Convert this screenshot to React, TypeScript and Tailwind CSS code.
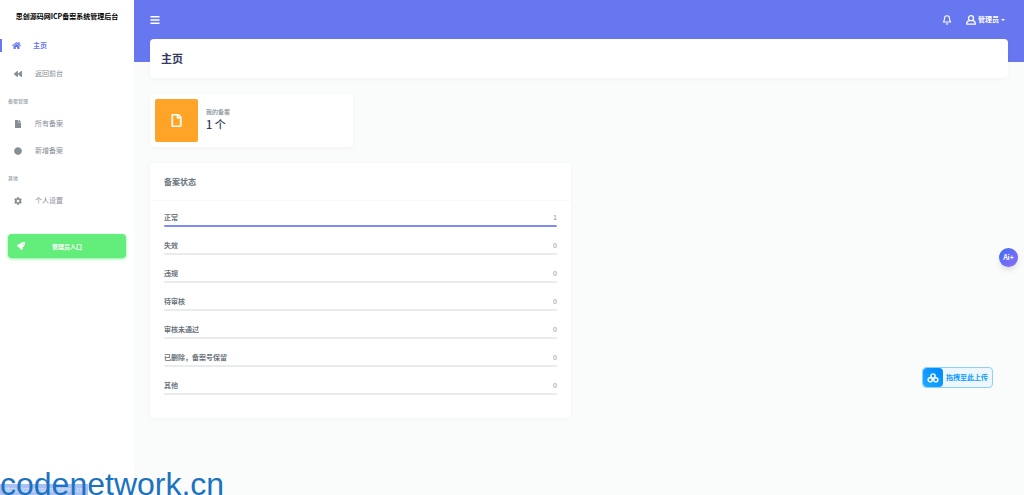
import React from "react";
import {
  FaHome,
  FaBackward,
  FaFile,
  FaCircle,
  FaCog,
  FaRocket,
  FaRegFile,
} from "react-icons/fa";
import { FiBell } from "react-icons/fi";

const recordMenu = [
  { label: "所有备案", icon: FaFile },
  { label: "新增备案", icon: FaCircle },
];

const statusList = [
  { label: "正常", count: 1 },
  { label: "失效", count: 0 },
  { label: "违规", count: 0 },
  { label: "待审核", count: 0 },
  { label: "审核未通过", count: 0 },
  { label: "已删除，备案号保留", count: 0 },
  { label: "其他", count: 0 },
];

function MenuLink({
  label,
  icon: Icon,
}: {
  label: string;
  icon: React.ComponentType<{ className?: string }>;
}) {
  return (
    <a
      href="#"
      className="flex h-[27px] items-center pl-[14px] text-[7px] text-[#868e96]"
    >
      <Icon className="mr-[13px] size-2" />
      {label}
    </a>
  );
}

function MenuHeading({ children }: { children: React.ReactNode }) {
  return (
    <h6 className="mt-1.5 mb-0.5 flex h-[15px] items-center pl-2 text-[5px] font-medium text-[#98a6ad]">
      {children}
    </h6>
  );
}

function Sidebar() {
  return (
    <aside className="w-[134px] shrink-0 bg-white">
      <div className="flex h-8 items-center justify-center text-[7px] font-bold text-black">
        思创源码网ICP备案系统管理后台
      </div>
      <nav>
        <a
          href="#"
          className="mt-[7px] flex h-[13px] items-center border-l-2 border-[#6777ef] pl-[10px] text-[7px] font-bold text-[#6777ef]"
        >
          <FaHome className="mr-3 size-[9px]" />
          主页
        </a>
        <div className="mt-2">
          <MenuLink label="返回前台" icon={FaBackward} />
        </div>
        <MenuHeading>备案管理</MenuHeading>
        {recordMenu.map((item) => (
          <MenuLink key={item.label} label={item.label} icon={item.icon} />
        ))}
        <MenuHeading>其他</MenuHeading>
        <MenuLink label="个人设置" icon={FaCog} />
      </nav>
      <div className="px-2 pt-5">
        <button
          type="button"
          className="flex h-6 w-full items-center rounded-sm bg-[#63ed7a] px-[9px] text-[6px] font-bold text-white shadow-[0_1px_3px_#81f394]"
        >
          <FaRocket className="size-2" />
          <span className="flex-1 pr-2 text-center">管理员入口</span>
        </button>
      </div>
    </aside>
  );
}

function TopBar() {
  return (
    <header className="flex h-[39px] items-center justify-between px-4 text-white">
      <button type="button" aria-label="菜单">
        <svg viewBox="0 0 10 10" className="size-[10px]" fill="currentColor">
          <path d="M.5 1h9v1.6h-9zM.5 4.2h9v1.6h-9zM.5 7.4h9V9h-9z" />
        </svg>
      </button>
      <div className="flex items-center gap-[14px] pr-[3px]">
        <button type="button" aria-label="通知">
          <FiBell className="size-[10px]" strokeWidth={2.5} />
        </button>
        <button
          type="button"
          className="flex items-center gap-0.5 text-[7px] font-bold"
        >
          <svg
            viewBox="0 0 10 10"
            className="size-[10px]"
            fill="none"
            stroke="currentColor"
            strokeWidth="1.3"
          >
            <circle cx="5" cy="3.2" r="2.5" />
            <path d="M3 5.6 1.6 6.3C1 6.7.8 7.3.8 8v1.2h8.4V8c0-.7-.2-1.3-.8-1.7L7 5.6" />
          </svg>
          管理员
          <span className="border-x-2 border-t-2 border-x-transparent border-t-white" />
        </button>
      </div>
    </header>
  );
}

function StatusCard() {
  return (
    <section className="rounded-sm bg-white pb-[11px] shadow-[0_1px_4px_rgba(0,0,0,0.04)]">
      <h4 className="flex h-[38px] items-center border-b border-[#f9f9f9] px-[14px] text-[8px] font-bold text-[#6c757d]">
        备案状态
      </h4>
      <ul className="px-[14px] pt-[10px] text-[7px] leading-3">
        {statusList.map((item) => (
          <li key={item.label} className="h-7">
            <div className="flex justify-between">
              <span className="font-bold text-[#6c757d]">{item.label}</span>
              <span className="text-[#868e96]">{item.count}</span>
            </div>
            <div
              className={
                item.count > 0
                  ? "mt-0.5 h-0.5 rounded-full bg-[#7f8cf2]"
                  : "mt-0.5 h-0.5 rounded-full bg-[#e9ecef]"
              }
            />
          </li>
        ))}
      </ul>
    </section>
  );
}

export default function App() {
  return (
    <div className="relative flex min-h-screen overflow-hidden bg-[#fafcfc] font-['Noto_Sans_CJK_SC',sans-serif]">
      <Sidebar />
      <div className="min-w-0 flex-1 bg-linear-to-b from-[#6777ef] from-[62px] to-transparent to-[62px]">
        <TopBar />
        <main className="px-4">
          <h1 className="flex h-[39px] items-center rounded-sm bg-white px-[11px] text-[11px] font-bold text-[#34395e] shadow-[0_1px_4px_rgba(0,0,0,0.04)]">
            主页
          </h1>
          <div className="mt-4 grid grid-cols-4 gap-4">
            <div className="flex h-[53px] items-center rounded-sm bg-white px-[5px] shadow-[0_1px_4px_rgba(0,0,0,0.04)]">
              <div className="flex size-[43px] items-center justify-center rounded-xs bg-[#ffa426] text-white">
                <FaRegFile
                  className="size-[13px]"
                  stroke="currentColor"
                  strokeWidth={20}
                />
              </div>
              <div className="ml-2 pb-1">
                <p className="text-[6px] leading-[10px] font-medium text-[#868e96]">
                  我的备案
                </p>
                <p className="text-[11px] leading-[14px] font-medium text-[#34395e]">
                  1 个
                </p>
              </div>
            </div>
          </div>
          <div className="mt-4 grid grid-cols-2 gap-4">
            <StatusCard />
          </div>
        </main>
      </div>

      {/* Floating tools */}
      <button
        type="button"
        className="absolute top-[248px] right-[6px] flex size-[19px] items-center justify-center rounded-full bg-linear-to-br from-[#3a6bf5] to-[#8b6cf8] text-[7px] font-bold text-white shadow-md"
      >
        Ai+
      </button>
      <button
        type="button"
        className="absolute top-[367px] right-[31px] flex h-[21px] items-center overflow-hidden rounded-sm border border-[#8fd0fb] bg-[#eef7ff] pr-1 text-[7px] font-bold text-[#0a9bff]"
      >
        <span className="mr-[3px] flex h-full w-5 items-center justify-center rounded-sm bg-linear-to-tr from-[#1fa9ff] to-[#0088ff] text-white">
          <svg
            viewBox="0 0 12 10"
            className="h-[10px] w-3"
            fill="none"
            stroke="currentColor"
            strokeWidth="1.4"
          >
            <circle cx="6" cy="3" r="2.1" />
            <circle cx="3.2" cy="6.8" r="2.1" />
            <circle cx="8.8" cy="6.8" r="2.1" />
          </svg>
        </span>
        拖拽至此上传
      </button>

      <div className="absolute bottom-0 left-0 h-[11px] w-[88px] bg-[#a9c0f3] pl-0.5 text-[6px] leading-[11px] whitespace-nowrap text-[#dbe6fb]">
        https://code.codenetwork.cn
      </div>
      <div className="absolute bottom-0 left-0 font-['Liberation_Sans',sans-serif] text-[32px] leading-[22px] text-[#1b72c0]">
        codenetwork.cn
      </div>
    </div>
  );
}
